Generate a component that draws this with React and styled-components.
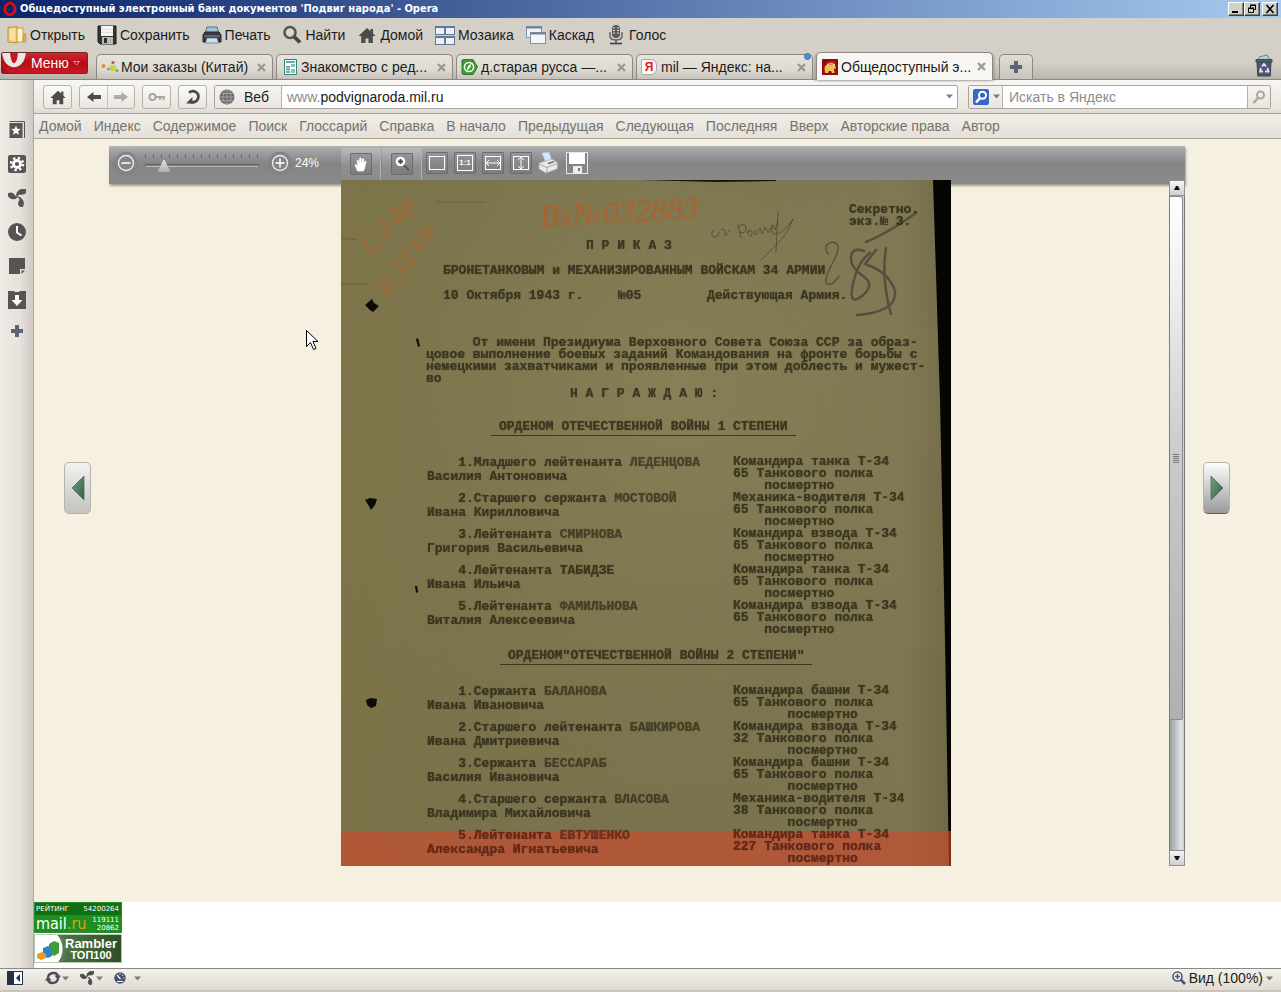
import React from "react";
import styled, { createGlobalStyle, css } from "styled-components";

const Global = createGlobalStyle`
  *, *::before, *::after { box-sizing: border-box; }
  html, body, #root { height: 100%; }
  body { margin: 0; overflow: hidden; background: #d4d0c8; font: 14px/18px "Liberation Sans", Arial, sans-serif; color: #1c1b19; }
  button { font: inherit; color: inherit; padding: 0; border: 0; background: none; }
  input { font: inherit; color: inherit; padding: 0; border: 0; background: none; outline: 0; min-width: 0; }
  svg { display: block; flex: none; }
  p, h1, h2, h3, ol, ul { margin: 0; padding: 0; list-style: none; font: inherit; }
`;

/* ---------- window ---------- */
const Window = styled.div`
  position: relative;
  display: flex;
  flex-direction: column;
  height: 100vh;
  min-height: 700px;
`;
const TitleBar = styled.header`
  display: flex;
  align-items: center;
  flex: none;
  height: 18px;
  padding: 0 3px;
  gap: 3px;
  background: linear-gradient(90deg, #0a246a, #a6caf0);
`;
const Title = styled.h1`
  flex: 1;
  color: #fff;
  font: bold 11px/16px "DejaVu Sans Condensed", "DejaVu Sans", Verdana, sans-serif;
  white-space: nowrap;
  overflow: hidden;
`;
const WindowButtons = styled.div`
  display: flex;
  & > button:last-child { margin-left: 2px; }
`;
const WindowButton = styled.button`
  display: grid;
  place-items: center;
  width: 16px;
  height: 14px;
  background: #d4d0c8;
  border: 1px solid;
  border-color: #fff #404040 #404040 #fff;
  box-shadow: inset -1px -1px #808080;
`;
const MainBar = styled.nav`
  display: flex;
  align-items: center;
  flex: none;
  gap: 12px;
  height: 34px;
  padding-left: 7px;
`;
const MainButton = styled.button`
  display: flex;
  align-items: center;
  gap: 3px;
`;

/* ---------- tabs ---------- */
const TabBar = styled.div`
  display: flex;
  align-items: stretch;
  flex: none;
  height: 28px;
  padding-right: 8px;
  border-bottom: 1px solid #8b8883;
  background: linear-gradient(#d4d0c8 40%, #bab6af);
`;
const MenuButton = styled.button`
  display: flex;
  align-items: center;
  gap: 4px;
  width: 87px;
  height: 22px;
  margin: 0 8px 0 1px;
  overflow: hidden;
  color: #fff;
  border: 1px solid #6f2a2a;
  border-radius: 2px;
  background: linear-gradient(#ce2a30, #b80c16 50%, #c81a22);
`;
const Tab = styled.div`
  position: relative;
  display: flex;
  align-items: center;
  width: 177px;
  margin: 2px 3px 0 0;
  padding: 0 5px 0 4px;
  gap: 2px;
  border: 1px solid #8b8883;
  border-bottom: 0;
  border-radius: 5px 5px 0 0;
  background: linear-gradient(#e6e3dd, #dedad4 60%, #c6c2bb);
  ${(p) => p.$active && css`
    margin: 0 6px -1px 0;
    background: #f8f6f2;
    box-shadow: -2px 1px 2px #8b888377, 2px 1px 2px #8b888377;
    z-index: 1;
  `}
`;
const TabLabel = styled.span`
  flex: 1;
  white-space: nowrap;
  overflow: hidden;
`;
const CloseTab = styled.button`
  display: grid;
  place-items: center;
  width: 11px;
  height: 16px;
`;
const Unread = styled.i`
  position: absolute;
  top: -2px;
  right: 1px;
  width: 7px;
  height: 7px;
  border-radius: 50%;
  background: #4a8fdc;
  border: 1px solid #3b72b5;
`;
const NewTab = styled.button`
  display: grid;
  place-items: center;
  width: 34px;
  margin-top: 2px;
  border: 1px solid #8b8883;
  border-bottom: 0;
  border-radius: 5px 5px 0 0;
  background: linear-gradient(#e0dcd6, #c9c5be);
`;
const TrashButton = styled.button`
  margin-left: auto;
`;

/* ---------- body ---------- */
const Body = styled.div`
  display: flex;
  flex: 1;
  min-height: 0;
`;
const SidePanel = styled.aside`
  display: flex;
  flex-direction: column;
  align-items: center;
  flex: none;
  gap: 16px;
  width: 34px;
  padding-top: 41px;
  border-right: 1px solid #aba59d;
  background: linear-gradient(90deg, #eeeae4, #e7e3dc 60%, #cfcbc4);
`;
const PanelButton = styled.button`
  display: grid;
  place-items: center;
  width: 18px;
  height: ${(p) => (p.$small ? 10 : 18)}px;
`;
const Main = styled.div`
  display: flex;
  flex-direction: column;
  flex: 1;
  min-width: 0;
`;
const AddressBar = styled.form`
  display: flex;
  align-items: center;
  flex: none;
  gap: 7px;
  height: 34px;
  padding: 0 10px 0 9px;
  border-bottom: 1px solid #a8a299;
  background: linear-gradient(#f8f6f2, #e9e6df 85%, #ddd9d1);
`;
const ButtonGroup = styled.div`
  display: flex;
  height: 24px;
  border: 1px solid #b5b1a9;
  border-radius: 3px;
  background: linear-gradient(#fbfaf8, #e9e6e0);
  & > button + button { border-left: 1px solid #c5c1b9; }
`;
const ToolButton = styled.button`
  display: grid;
  place-items: center;
  width: 27px;
`;
const Field = styled.div`
  display: flex;
  align-items: stretch;
  flex: ${(p) => (p.$wide ? 1 : "none")};
  width: ${(p) => (p.$wide ? "auto" : "303px")};
  margin-left: ${(p) => (p.$wide ? 0 : 3)}px;
  height: 24px;
  border: 1px solid #a9a59e;
  border-radius: 2px;
  background: #fff;
`;
const FieldHead = styled.button`
  display: flex;
  align-items: center;
  width: ${(p) => p.$w}px;
  padding-left: 4px;
  gap: ${(p) => p.$gap}px;
  border-right: 1px solid #b5b1a9;
  background: linear-gradient(#f6f4f0, #e9e6e0);
`;
const Prefix = styled.label`
  align-self: center;
  padding-left: 5px;
  color: #8a8a8a;
`;
const TextInput = styled.input`
  flex: 1;
  padding-left: ${(p) => p.$pad}px;
  &::placeholder { color: #8c8c8c; opacity: 1; }
`;
const FieldTail = styled.button`
  display: grid;
  place-items: center;
  width: ${(p) => (p.$boxed ? 23 : 15)}px;
  ${(p) => p.$boxed && css`
    border-left: 1px solid #b5b1a9;
    background: linear-gradient(#f6f4f0, #e9e6e0);
  `}
`;
const LinkBar = styled.nav`
  display: flex;
  align-items: center;
  flex: none;
  gap: 12px;
  height: 25px;
  padding-left: 5px;
  border-bottom: 1px solid #aaa399;
  background: linear-gradient(#f1eee9, #e4e0d8);
  white-space: nowrap;
`;
const BarLink = styled.a`
  color: #77736c;
  text-decoration: none;
`;

/* ---------- viewer ---------- */
const Page = styled.main`
  position: relative;
  display: flex;
  flex: 1;
  min-height: 0;
  padding: 7px 0 36px;
  background: #f5f0df;
`;
const PagerCell = styled.div`
  display: flex;
  align-items: center;
  flex: none;
  width: ${(p) => p.$w}px;
  padding: 0 0 36px ${(p) => p.$pad}px;
`;
const PagerButton = styled.button`
  display: grid;
  place-items: center;
  width: 27px;
  height: 52px;
  border: 1px solid #b5b3ad;
  border-bottom-color: ${(p) => (p.$strong ? "#5f5f5f" : "#b5b3ad")};
  border-radius: 5px;
  background: ${(p) => (p.$strong ? "linear-gradient(#fdfdfd, #9b9b9b)" : "linear-gradient(#f3f2f0, #c4c2c0)")};
`;
const Viewer = styled.section`
  display: flex;
  flex-direction: column;
  flex: 1;
  min-width: 0;
`;
const ViewerBar = styled.div`
  display: flex;
  align-items: center;
  flex: none;
  height: 38px;
  padding: 0 0 4px 6px;
  color: #fff;
  background: linear-gradient(#b5b5b5, #a4a4a4 10%, #858585 45%, #8a8a8a);
  box-shadow: 1px 2px 2px #8f897acc;
`;
const RoundButton = styled.button`
  display: grid;
  place-items: center;
  width: 22px;
  height: 22px;
  border-radius: 50%;
  background: #858585;
  box-shadow: 0 0 1px #6b6b6b;
`;
const ZoomSlider = styled.div`
  display: block;
  width: 114px;
  height: 22px;
  margin: 0 10px 0 8px;
`;
const Range = styled.input`
  display: block;
  width: 100%;
  height: 13px;
  margin: 0;
  appearance: none;
  &::-webkit-slider-runnable-track {
    height: 3px;
    border: 1px solid #5e5e5e;
    border-bottom-color: #b5b5b5;
    border-radius: 2px;
  }
  &::-webkit-slider-thumb {
    appearance: none;
    width: 12px;
    height: 12px;
    margin-top: -5px;
    background: linear-gradient(#e0e0e0, #b0b0b0);
    clip-path: polygon(45% 0, 55% 0, 100% 90%, 95% 100%, 5% 100%, 0 90%);
  }
`;
const Percent = styled.output`
  width: 50px;
  padding-left: 4px;
  font-size: 12px;
`;
const ModeCell = styled.div`
  display: grid;
  place-items: center;
  align-self: stretch;
  width: 40px;
  margin: 2px 1px -4px 0;
  padding-bottom: 4px;
  border-right: 1px solid #b0b0b0;
  background: linear-gradient(#bababa, #8f8f8f 50%, #8a8a8a);
`;
const SquareButton = styled.button`
  display: grid;
  place-items: center;
  width: 22px;
  height: 22px;
  background: linear-gradient(#969696, #7c7c7c);
  border: 1px solid #6c6c6c;
  border-radius: 1px;
  color: #fff;
  font: bold 9px/10px "Liberation Sans", Arial, sans-serif;
`;
const ActionButtons = styled.div`
  display: flex;
  gap: 6px;
  padding-left: 3px;
`;
const PlainButton = styled.button`
  display: grid;
  place-items: center;
  width: 22px;
  height: 22px;
`;
const RatioBox = styled.span`
  padding: 2px 1px;
  border: 1px solid #fff;
  font-size: 8px;
`;
const Stage = styled.div`
  position: relative;
  display: grid;
  grid-template-columns: 1fr 610px 1fr;
  flex: 1;
  min-height: 0;
  margin-top: -4px;
`;
const Sheet = styled.article`
  position: relative;
  grid-column: 2;
  min-height: 0;
  overflow: hidden;
  margin-left: -1px;
  margin-right: 1px;
  background: linear-gradient(90deg, #857c4e, #827a52 20%, #827b56 70%, #877f5b 92%, #766e4a);
  color: #2f2b19;
  font: bold 13px/12px "Liberation Mono", "Courier New", monospace;
  white-space: pre;
`;
const SheetArt = styled.svg`
  position: absolute;
  inset: 0;
`;
const Typed = styled.div`
  position: relative;
  opacity: 0.84;
  text-shadow: 0 0 1px #2f2b19;
`;
const Stamp = styled.p`
  padding: 24px 0 0 508px;
`;
const Centered = styled.h2`
  padding-left: ${(p) => p.$left}px;
  margin-top: ${(p) => p.$top}px;
`;
const DateLine = styled.p`
  display: grid;
  grid-template-columns: 175px 89px 1fr;
  margin-top: 13px;
  padding-left: 102px;
`;
const Preamble = styled.p`
  margin-top: 35px;
  padding-left: 85px;
`;
const AwardTitle = styled.h3`
  width: max-content;
  margin: ${(p) => p.$top}px 0 0 ${(p) => p.$left}px;
  padding: 0 8px 2px;
  border-bottom: 1px solid #2f2b19;
`;
const Awards = styled.ol`
  margin-top: ${(p) => p.$top}px;
`;
const Award = styled.li`
  display: grid;
  grid-template-columns: 306px 1fr;
  height: 36px;
  padding-left: 86px;
  color: ${(p) => (p.$marked ? "#5e1c10" : "inherit")};
`;
const Person = styled.p`
  line-height: 14px;
`;
const Name = styled.b`
  opacity: ${(p) => (p.$faint ? 0.85 : 1)};
`;
const Highlight = styled.div`
  position: absolute;
  left: 0;
  right: 0;
  bottom: 0;
  height: 35px;
  background: #d4482c99;
`;
const Scroll = styled.div`
  display: flex;
  flex-direction: column;
  justify-self: end;
  grid-column: 3;
  width: 16px;
  border: 1px solid #777d7c;
  background: linear-gradient(90deg, #98a0a1, #e2e6e6 80%, #c9cdcd);
`;
const ScrollArrow = styled.button`
  display: grid;
  place-items: center;
  flex: none;
  height: 14px;
  background: linear-gradient(#f6f6f6, #cfcfcf);
  outline: 1px solid #8d9191;
`;
const ScrollTrack = styled.div`
  flex: 1;
  padding-top: 1px;
`;
const ScrollThumb = styled.div`
  display: grid;
  place-items: center;
  width: 13px;
  height: 80%;
  border: 1px solid #8b8b94;
  border-left: 0;
  border-radius: 0 3px 2px 0;
  background: linear-gradient(#fff, #ececec 20%, #cacaca 50%, #b0b0b0);
`;
const Pointer = styled.svg`
  position: absolute;
  left: 272px;
  top: 191px;
`;

/* ---------- counters & status ---------- */
const Counters = styled.footer`
  flex: none;
  display: flex;
  flex-direction: column;
  align-items: flex-start;
  gap: 1px;
  height: 66px;
  background: #fff;
`;
const MailBadge = styled.a`
  display: flex;
  flex-direction: column;
  width: 88px;
  height: 31px;
  color: #fff;
  text-decoration: none;
  border: 1px solid #2c8a2c;
  background: linear-gradient(#106f13 12px, #1f8f22 12px);
  font: 7px/8px "DejaVu Sans", Verdana, sans-serif;
`;
const BadgeRow = styled.span`
  display: flex;
  align-items: center;
  justify-content: space-between;
  height: ${(p) => p.$h}px;
  padding: 0 2px 0 1px;
  text-align: right;
`;
const MailLogo = styled.span`
  font: 16px/16px "DejaVu Sans Condensed", "DejaVu Sans", sans-serif;
  & > b { font-weight: normal; color: #e0a112; }
`;
const RamblerBadge = styled.a`
  display: flex;
  align-items: center;
  width: 88px;
  height: 29px;
  color: #fff;
  text-decoration: none;
  border: 1px solid #b9c9b3;
  background: radial-gradient(circle at 6px 14px, #fff 21px, #5f7d55 22px, #4d7043 28px, #2b4f23);
`;
const RamblerText = styled.span`
  display: block;
  padding-left: 6px;
  font: bold 13px/13px "Liberation Sans", Arial, sans-serif;
  text-align: center;
  & > small { display: block; font-size: 11px; line-height: 11px; }
`;
const StatusBar = styled.footer`
  display: flex;
  align-items: center;
  flex: none;
  height: 24px;
  padding: 0 8px 3px 7px;
  border-top: 1px solid #8c8984;
  border-bottom: 2px solid #c9c5bd;
  background: linear-gradient(#f3f1ec, #dfdbd3);
`;
const StatusButton = styled.button`
  display: flex;
  align-items: center;
  gap: ${(p) => p.$gap}px;
  margin-left: ${(p) => p.$left}px;
`;
const ViewButton = styled(StatusButton)`
  margin-left: auto;
`;

/* ---------- icons ---------- */
const Svg = ({ w = 20, h = w, vb, children, ...r }) => (
  <svg width={w} height={h} viewBox={vb || `0 0 ${w} ${h}`} aria-hidden="true" {...r}>{children}</svg>
);
const OperaIcon = () => (
  <Svg w={14}><ellipse cx="7" cy="7" rx="5" ry="5.600" fill="none" stroke="#d01018" strokeWidth="3.200" /><ellipse cx="7" cy="7" rx="2" ry="4.400" fill="#0a246a" /></Svg>
);
const OpenIcon = () => (
  <Svg><path d="M9 3h7v14H8z" fill="#fff3d0" stroke="#c99b3f" /><path d="M17 9h2v8h-3z" fill="#e0b04f" stroke="#b98a35" strokeWidth=".6" /><path d="M1 2.500l9-1V18l-9-1z" fill="#f4cf80" stroke="#bf9138" /><path d="M3 4l5-.6v12l-5-.8z" fill="#fbe0a0" /></Svg>
);
const SaveIcon = () => (
  <Svg><path d="M1 1h18v18H3l-2-2z" fill="#353535" stroke="#1d1d1d" /><rect x="4" y="1" width="12" height="10" fill="#f4f4f4" /><path d="M4 4.500h12M4 7.500h12" stroke="#e2e2e2" /><rect x="5" y="12" width="11" height="7" fill="#b9b9b9" /><rect x="7" y="13" width="3" height="5" fill="#2d2d2d" /></Svg>
);
const PrintIcon = () => (
  <Svg><path d="M5 2h10l2 7H3z" fill="#9fc3dc" stroke="#56748a" /><path d="M3 7h14l2 3v7H1v-7z" fill="#363b40" stroke="#23272a" /><path d="M2 11h16" stroke="#87919a" /><path d="M5 13h10l1.500 5h-13z" fill="#c9e0ee" stroke="#617889" strokeWidth=".8" /></Svg>
);
const SearchIcon = () => (
  <Svg><circle cx="8" cy="7.500" r="5.500" fill="#d9d7d2" stroke="#555" strokeWidth="2.600" /><path d="M12 11.500l6 6" stroke="#454545" strokeWidth="3.800" /></Svg>
);
const HomeIcon = ({ w = 20 }) => (
  <Svg w={w} vb="0 0 20 20"><path d="M10 3L1.500 11h2.700v7h4.300v-4.500h3V18h4.300v-7h2.700L16 8.500V4h-2.500v2.200z" fill="#4c4c4a" /></Svg>
);
const MosaicIcon = () => (
  <Svg>{[[0, 1], [10, 1], [0, 11], [10, 11]].map(([x, y]) => (
    <g key={x + "-" + y}><rect x={x + 0.5} y={y + 0.5} width="9" height="8" fill="#edf0f5" stroke="#647796" /><path d={`M${x} ${y + 1}h10`} stroke="#647796" strokeWidth="2" /></g>
  ))}</Svg>
);
const CascadeIcon = () => (
  <Svg><rect x=".5" y="1.500" width="15" height="11" fill="#eef1f6" stroke="#8090ac" /><path d="M0 2.500h16" stroke="#6f81a0" strokeWidth="2" /><rect x="4.500" y="7.500" width="15" height="11" fill="#f5f6f8" stroke="#8090ac" /><path d="M4 8.500h16" stroke="#6f81a0" strokeWidth="2" /></Svg>
);
const MicIcon = () => (
  <Svg><rect x="6" y="0" width="8" height="13" rx="4" fill="#5a5a5a" /><path d="M7 3h2M11 3h2M7 5.500h2M11 5.500h2M7 8h2M11 8h2" stroke="#e0e0e0" /><path d="M4 7v4c0 2.500 2 4 6 4s6-1.500 6-4V7M10 15v3" fill="none" stroke="#555" strokeWidth="1.300" /><path d="M4 18.500h12" stroke="#3f3f3f" strokeWidth="1.600" /></Svg>
);
const MenuO = () => (
  <Svg w={25} h={20}><path d="M0 -3C0 20 24 20 24 -3z" fill="#e9e7e5" /><path d="M8 -4C8 15 16 15 16 -4z" fill="#c41820" /><path d="M0 7v6C4 18 8 20 8 20H0z" fill="#a8121a" /></Svg>
);
const Chevron = ({ c = "#7d7a7a" }) => <Svg w={7} h={5}><path d="M0 .5h7L3.500 4.500z" fill={c} /></Svg>;
const MenuChevron = () => <Svg w={7} h={5}><path d="M.5.500h6l-3 3.500z" fill="none" stroke="#e58f94" /></Svg>;
const CloseIcon = () => <Svg w={9}><path d="M1 1l7 7M8 1L1 8" stroke="#9a9791" strokeWidth="2.200" /></Svg>;
const Plus = ({ w = 12 }) => <Svg w={w} vb="0 0 12 12"><path d="M4 0h4v4h4v4H8v4H4V8H0V4h4z" fill="#5d6478" /></Svg>;
const OrdersIcon = () => (
  <Svg w={18}><circle cx="2.500" cy="8" r="2" fill="#f08a28" /><circle cx="7.500" cy="11" r="1.600" fill="#4fb3d8" /><circle cx="12" cy="4.500" r="1.600" fill="#b04d94" /><circle cx="12" cy="10" r="3.200" fill="#c9d43a" /><circle cx="16" cy="12.500" r="1.500" fill="#45b3b5" /></Svg>
);
const NewsIcon = () => (
  <Svg w={18}><path d="M3.500 1.500h12v15h-12z" fill="#fff" stroke="#3d817b" /><path d="M5 4h9M5 9h4M5 11.500h4M5 14h4" stroke="#2e9490" strokeWidth="1.600" /><path d="M10 6h4v3h-4zM10 11h4v4h-4z" fill="#7cc7b6" /></Svg>
);
const CompassIcon = () => (
  <Svg w={18}><path d="M1 3q0-1.500 1.500-1.500H12l4.500 7.500-4.500 7.500H2.500Q1 16.500 1 15z" fill="#3a9e35" stroke="#2a7a28" /><circle cx="8" cy="9" r="4.600" fill="none" stroke="#fff" strokeWidth="1.500" /><path d="M10.500 5.500L9 10l-3.500 2.500L7 8z" fill="#fff" /></Svg>
);
const YaMark = styled.span`
  display: grid;
  place-items: center;
  width: 16px;
  height: 16px;
  margin-right: 2px;
  color: #e01b12;
  background: #f9f9f9;
  border: 1px solid #aaa;
  border-radius: 2px 6px 6px 2px;
  font: bold 12px/14px "Liberation Sans Narrow", "Liberation Sans", sans-serif;
`;
const EmblemIcon = () => (
  <Svg w={18}><rect x="1" y="1" width="16" height="16" fill="#8e0f10" /><path d="M4 8q5-4 10-1l1 3-2 1 .5 4H11l-1-2H8l-1 2H4l-.5-4z" fill="#f2c14a" /><path d="M5 6q3-4 9-2l-1 3H6z" fill="#d8281d" /><path d="M6 6.500q4-1.500 8 0" stroke="#fff0c0" fill="none" /></Svg>
);
const TrashIcon = () => (
  <Svg w={18} h={24}><path d="M4 3l8-2 3 5H4z" fill="#a8d7cf" stroke="#5b8e8a" /><path d="M1 5.500h16V8H1z" fill="#59647d" stroke="#39425a" /><path d="M2 8h14l-.8 14H2.800z" fill="#4b5670" stroke="#39425a" /><path d="M7 12.500l2-2.500 2 2.500M12.500 14l1 3.500H10M8 17.500H5L6 14" stroke="#dfe6f2" strokeWidth="1.800" fill="none" /></Svg>
);
const Arrow = ({ back, c }) => <Svg w={16}><path d={back ? "M1 8l6.500-5v3H15v4H7.500v3z" : "M15 8L8.500 3v3H1v4h7.500v3z"} fill={c} /></Svg>;
const KeyIcon = () => <Svg w={18}><circle cx="4.500" cy="9" r="3" fill="none" stroke="#aaa7a2" strokeWidth="2" /><path d="M7 9h10M12 9v3M15.500 9v3" stroke="#aaa7a2" strokeWidth="2" fill="none" /></Svg>;
const ReloadIcon = () => <Svg w={18}><path d="M5 4.500C10 1 15.500 5 14.200 10c-1 4.500-7 5.500-9.500 3" fill="none" stroke="#4b4b49" strokeWidth="2.800" /><path d="M2 9h6.500v6.500z" fill="#4b4b49" transform="rotate(90 5.250 12.250)" /></Svg>;
const GlobeIcon = () => (
  <Svg w={16}><circle cx="8" cy="8" r="7.500" fill="#6c6c6c" /><path d="M0.500 8h15M8 .5v15M2 4.500h12M2 11.500h12" stroke="#a9a9a9" fill="none" strokeWidth=".8" /><ellipse cx="8" cy="8" rx="4" ry="7.500" fill="none" stroke="#a9a9a9" strokeWidth=".8" /></Svg>
);
const YaSearch = () => <Svg w={16}><rect width="16" height="16" rx="2" fill="#3767c9" /><circle cx="9.500" cy="6.200" r="3.500" fill="none" stroke="#fff" strokeWidth="2" /><path d="M7 9l-4 4.500" stroke="#fff" strokeWidth="2.600" /></Svg>;
const GraySearch = () => <Svg w={14}><circle cx="8.500" cy="5" r="3.500" fill="none" stroke="#aaa7a1" strokeWidth="2" /><path d="M6 8l-4.500 5" stroke="#aaa7a1" strokeWidth="2.600" /></Svg>;
const dark = "#565553";
const PanelIcons = {
  Закладки: <Svg w={18}><path d="M1.500 2h13v15h-13z" fill={dark} /><path d="M1.500.500h15V17" stroke={dark} fill="none" /><path d="M8 4.500l1.300 3.300 3.500.2-2.700 2.300.9 3.500-3-1.900-3 1.900.9-3.500L3.200 8l3.500-.2z" fill="#fff" /></Svg>,
  Виджеты: <Svg w={18}><rect width="18" height="18" rx="2" fill={dark} /><circle cx="9" cy="9" r="3.500" fill="none" stroke="#fff" strokeWidth="2.800" /><circle cx="9" cy="9" r="6" fill="none" stroke="#fff" strokeWidth="2.600" strokeDasharray="2.350 2.362" /></Svg>,
  Unite: <Svg w={18}><path d="M9 7C8 3 12-.5 18 .5c.5 4-3 5-6 4.500C10.500 5 10 6 9 7zM9 8c-3 3-8 2-9-3 3-2 5.500-.5 6.500 1.500C7 7.500 8 8 9 8zM10 8c4 1 6.500 5 4.500 9.500-4 .5-4.500-3-3-5.500 1-1.500.5-3-1.500-4z" fill={dark} stroke={dark} strokeWidth="1.200" /></Svg>,
  История: <Svg w={18}><circle cx="9" cy="9" r="9" fill={dark} /><path d="M9 3v6.500l4.500 3" fill="none" stroke="#fff" strokeWidth="2" /></Svg>,
  Заметки: <Svg w={18}><path d="M1 1h16v11h-5v5H1z" fill={dark} /><path d="M13.500 17v-3.500H17z" fill={dark} /></Svg>,
  Загрузки: <Svg w={18}><path d="M0 0h6l1 1h4l1-1h6v18H0z" fill={dark} /><path d="M7 4h4v5h3.500L9 15 3.500 9H7z" fill="#fff" /></Svg>,
};
const HandIcon = () => <Svg w={18}><path d="M5.500 16L3 10l1-.6 2 2L5 5.500l1.300-.3 1.200 3.500L7.700 3h1.400l.4 5.500 1-4.800 1.300.3-.4 5L13 6l1 .5-1.200 6L11.500 16z" fill="#fff" stroke="#fff" strokeWidth=".6" /></Svg>;
const MagnifyIcon = () => <Svg w={18}><path d="M11 10l5 5.500" stroke="#5b5b5b" strokeWidth="2" /><circle cx="7.500" cy="6.500" r="4.800" fill="#fff" /><path d="M5 6.500h5M7.500 4v5" stroke="#444" strokeWidth="1.800" /></Svg>;
const FrameIcon = ({ d }) => <Svg w={18} h={16}><rect x="1.500" y="1.500" width="15" height="13" fill="none" stroke="#fff" />{d && <path d={d} fill="none" stroke="#fff" />}</Svg>;
const PrinterLight = () => (
  <Svg w={22}><path d="M4 1l7-1 3 9H7z" fill="#d5e5fb" stroke="#a3bfe8" strokeWidth=".7" /><path d="M1 11l13-4 6 4-1 6-11 4-7-4z" fill="#e9e9e6" stroke="#a9a9a6" strokeWidth=".7" /><path d="M1 12l8 3.500 11-4.300M9 15.500V21" stroke="#a5a5a2" fill="none" /><path d="M9 11l6-2 2 1-6 2.300z" fill="#777" /></Svg>
);
const FloppyLight = () => (
  <Svg w={22}><rect x=".5" y=".5" width="21" height="21" fill="#858585" stroke="#e8e8e8" /><rect x="3" y="1" width="16" height="11" fill="#fff" /><rect x="7" y="14" width="9" height="7" fill="#ededed" /><rect x="12" y="16" width="2" height="3" fill="#777" /></Svg>
);
const Triangle = ({ right }) => (
  <Svg w={14} h={26}><defs><linearGradient id={right ? "tr" : "tl"} x1="0" y1="0" x2="1" y2="1"><stop offset="0" stopColor="#7aa188" /><stop offset="1" stopColor="#2f5e41" /></linearGradient></defs><path d={right ? "M1 1v24l12-12z" : "M13 1v24L1 13z"} fill={`url(#${right ? "tr" : "tl"})`} stroke="#4a6f56" strokeWidth=".8" /></Svg>
);

/* Ink, pencil and wear on the scanned sheet */
const SheetMarks = () => (
  <SheetArt width="610" height="686" viewBox="0 0 610 686" aria-hidden="true">
    <defs>
      <filter id="grain" x="0" y="0" width="100%" height="100%">
        <feTurbulence type="fractalNoise" baseFrequency="0.35" numOctaves="3" seed="4" />
        <feColorMatrix values="0 0 0 0 0.2  0 0 0 0 0.18  0 0 0 0 0.08  0.5 0 0 0 -0.12" />
      </filter>
      <radialGradient id="lamp" cx=".55" cy=".3" r=".8"><stop offset="0" stopColor="#938a5c" stopOpacity=".35" /><stop offset="1" stopColor="#4f4928" stopOpacity=".18" /></radialGradient>
    </defs>
    <rect width="610" height="686" fill="url(#lamp)" />
    <rect width="610" height="686" filter="url(#grain)" opacity=".4" />
    <path d="M592 0L599 220 604 460 608 686H610V0z" fill="#050504" />
    <path d="M300 0h135v1l-60 1z" fill="#17150c" />
    <g fill="#0c0b07">
      <path d="M24 125l7-6 2 4 5 3-6 6-3-2z" />
      <path d="M24 320l5-2 7 1-2 6-4 5-2-4z" />
      <path d="M25 520l5-2 6 1-1 7-5 2-4-3z" />
      <path d="M75 159l2-1 2 8-2 1zM74 406h2l1 6-2 1z" />
    </g>
    <g fill="#b0602c" opacity=".9" fontFamily="Liberation Serif, serif" fontStyle="italic" fontWeight="400">
      <text x="199" y="47" fontSize="32" transform="rotate(-3 199 47)">Вх№032883</text>
      <text x="30" y="76" fontSize="25" transform="rotate(-48 30 76)">С 3 др</text>
      <text x="46" y="119" fontSize="22" transform="rotate(-54 46 119)">31.12.43г</text>
    </g>
    <path d="M23 115L62 66l14-9" fill="none" stroke="#a85d2d" opacity=".6" />
    <g fill="none" stroke="#45413a" strokeLinecap="round">
      <path d="M372 50q-3 6 1 7t5-5M380 50q4-4 4 6l5-6M397 45l3 13M397 47q8-6 8 1t-7 4M407 52q4-4 4 1t-3 2q-3-1 0-5M415 50q-4 3 0 5l4-7 2 6 3-7 3 6 4-8 3 5 3-9M437 32l-2 40M433 45q-6 8 1 9t18-15q-6 16-16 25L420 80" opacity=".7" />
      <path d="M487 74q-6-10 5-12 10 2 0 20t-6 22q6 2 12-8" strokeWidth="1.500" opacity=".7" />
      <path d="M523 71q-12-4-13 6t12 19-1 20-9-12 17-31M535 70l-11 14q24 8 30 27 2 21-38 24M545 68q-5 30 5 66M525 62q20-8 50-29" strokeWidth="2.500" opacity=".75" />
    </g>
    <path d="M0 104h28M0 58l16 2M95 22h50" stroke="#4b4527" opacity=".35" />
  </SheetArt>
);

/* ---------- data ---------- */
const mainItems = [
  ["Открыть", <OpenIcon />], ["Сохранить", <SaveIcon />], ["Печать", <PrintIcon />], ["Найти", <SearchIcon />],
  ["Домой", <HomeIcon />], ["Мозаика", <MosaicIcon />], ["Каскад", <CascadeIcon />], ["Голос", <MicIcon />],
];
const tabs = [
  { label: "Мои заказы (Китай)", icon: <OrdersIcon /> },
  { label: "Знакомство с ред...", icon: <NewsIcon /> },
  { label: "д.старая русса —...", icon: <CompassIcon /> },
  { label: "mil — Яндекс: на...", icon: <YaMark>Я</YaMark>, unread: true },
  { label: "Общедоступный э...", icon: <EmblemIcon />, active: true },
];
const links = ["Домой", "Индекс", "Содержимое", "Поиск", "Глоссарий", "Справка", "В начало", "Предыдущая", "Следующая", "Последняя", "Вверх", "Авторские права", "Автор"];
const preamble = [
  "      От имени Президиума Верховного Совета Союза ССР за образ-",
  "цовое выполнение боевых заданий Командования на фронте борьбы с",
  "немецкими захватчиками и проявленные при этом доблесть и мужест-",
  "во",
].join("\n");
const firstDegree = [
  ["1.Младшего лейтенанта", "ЛЕДЕНЦОВА", "Василия Антоновича", "Командира танка Т-34", "65"],
  ["2.Старшего сержанта", "МОСТОВОЙ", "Ивана Кирилловича", "Механика-водителя Т-34", "65"],
  ["3.Лейтенанта", "СМИРНОВА", "Григория Васильевича", "Командира взвода Т-34", "65"],
  ["4.Лейтенанта", "ТАБИДЗЕ", "Ивана Ильича", "Командира танка Т-34", "65"],
  ["5.Лейтенанта", "ФАМИЛЬНОВА", "Виталия Алексеевича", "Командира взвода Т-34", "65"],
];
const secondDegree = [
  ["1.Сержанта", "БАЛАНОВА", "Ивана Ивановича", "Командира башни Т-34", "65"],
  ["2.Старшего лейтенанта", "БАШКИРОВА", "Ивана Дмитриевича", "Командира взвода Т-34", "32"],
  ["3.Сержанта", "БЕССАРАБ", "Василия Ивановича", "Командира башни Т-34", "65"],
  ["4.Старшего сержанта", "ВЛАСОВА", "Владимира Михайловича", "Механика-водителя Т-34", "38"],
  ["5.Лейтенанта", "ЕВТУШЕНКО", "Александра Игнатьевича", "Командира танка Т-34", "227"],
];
const AwardList = ({ rows, top, indent, marked }) => (
  <Awards $top={top}>
    {rows.map(([rank, name, given, post, unit]) => (
      <Award key={name} $marked={name === marked}>
        <Person>{"    " + rank + " "}<Name $faint={name !== "ТАБИДЗЕ"}>{name}</Name>{"\n" + given}</Person>
        <p>{`${post}\n${unit} Танкового полка\n${" ".repeat(indent)}посмертно`}</p>
      </Award>
    ))}
  </Awards>
);

export default function App() {
  return (
    <Window>
      <Global />
      <TitleBar>
        <OperaIcon />
        <Title>Общедоступный электронный банк документов 'Подвиг народа' - Opera</Title>
        <WindowButtons>
          <WindowButton aria-label="Свернуть"><Svg w={10}><path d="M1 8h6" stroke="#000" strokeWidth="2" /></Svg></WindowButton>
          <WindowButton aria-label="Восстановить"><Svg w={10}><path d="M3.500 4V1.500h5v4H7M3 1h6" stroke="#000" fill="none" /><path d="M1.500 4.500h5v4h-5zM1 4h6" stroke="#000" fill="none" /></Svg></WindowButton>
          <WindowButton aria-label="Закрыть"><Svg w={10}><path d="M1.500 1l7 8M8.500 1l-7 8" stroke="#000" strokeWidth="1.600" /></Svg></WindowButton>
        </WindowButtons>
      </TitleBar>
      <MainBar>
        {mainItems.map(([label, icon]) => <MainButton key={label}>{icon}{label}</MainButton>)}
      </MainBar>
      <TabBar>
        <MenuButton><MenuO />Меню<MenuChevron /></MenuButton>
        {tabs.map((t) => (
          <Tab key={t.label} $active={t.active}>
            {t.icon}<TabLabel>{t.label}</TabLabel>
            <CloseTab aria-label="Закрыть вкладку"><CloseIcon /></CloseTab>
            {t.unread && <Unread />}
          </Tab>
        ))}
        <NewTab aria-label="Новая вкладка"><Plus /></NewTab>
        <TrashButton aria-label="Закрытые вкладки"><TrashIcon /></TrashButton>
      </TabBar>
      <Body>
        <SidePanel>
          {Object.entries(PanelIcons).map(([k, icon]) => <PanelButton key={k} aria-label={k}>{icon}</PanelButton>)}
          <PanelButton $small aria-label="Добавить"><Plus /></PanelButton>
        </SidePanel>
        <Main>
          <AddressBar onSubmit={(e) => e.preventDefault()}>
            <ButtonGroup><ToolButton type="button" aria-label="Домой"><HomeIcon w={18} /></ToolButton></ButtonGroup>
            <ButtonGroup>
              <ToolButton type="button" aria-label="Назад"><Arrow back c="#4b4b49" /></ToolButton>
              <ToolButton type="button" aria-label="Вперёд"><Arrow c="#aeaba6" /></ToolButton>
            </ButtonGroup>
            <ButtonGroup><ToolButton type="button" aria-label="Пароль"><KeyIcon /></ToolButton></ButtonGroup>
            <ButtonGroup><ToolButton type="button" aria-label="Обновить"><ReloadIcon /></ToolButton></ButtonGroup>
            <Field $wide>
              <FieldHead type="button" $w={67} $gap={9}><GlobeIcon />Веб</FieldHead>
              <Prefix htmlFor="address">www.</Prefix>
              <TextInput id="address" $pad={0} defaultValue="podvignaroda.mil.ru" />
              <FieldTail type="button" aria-label="Показать адреса"><Chevron c="#7a7f8e" /></FieldTail>
            </Field>
            <Field>
              <FieldHead type="button" $w={34} $gap={4} aria-label="Поисковая система"><YaSearch /><Chevron /></FieldHead>
              <TextInput $pad={6} placeholder="Искать в Яндекс" aria-label="Искать в Яндекс" />
              <FieldTail $boxed aria-label="Искать"><GraySearch /></FieldTail>
            </Field>
          </AddressBar>
          <LinkBar>{links.map((l) => <BarLink key={l} href="#">{l}</BarLink>)}</LinkBar>
          <Page>
            <PagerCell $w={75} $pad={30}><PagerButton aria-label="Предыдущий лист"><Triangle /></PagerButton></PagerCell>
            <Viewer>
              <ViewerBar>
                <RoundButton aria-label="Уменьшить"><Svg w={20}><circle cx="10" cy="10" r="7.500" fill="none" stroke="#eee" strokeWidth="1.300" /><path d="M5.500 10h9" stroke="#eee" strokeWidth="1.800" /></Svg></RoundButton>
                <ZoomSlider>
                  <Svg w={114} h={7}><path d={Array.from({ length: 15 }, (_, i) => `M${i * 8 + 0.5} 2v4`).join("")} stroke="#6b6b6b" /></Svg>
                  <Range type="range" min="0" max="100" defaultValue="12" aria-label="Масштаб" />
                </ZoomSlider>
                <RoundButton aria-label="Увеличить"><Svg w={20}><circle cx="10" cy="10" r="7.500" fill="none" stroke="#eee" strokeWidth="1.300" /><path d="M5.500 10h9M10 5.500v9" stroke="#eee" strokeWidth="1.800" /></Svg></RoundButton>
                <Percent>24%</Percent>
                <ModeCell><SquareButton aria-label="Перемещать"><HandIcon /></SquareButton></ModeCell>
                <ModeCell><SquareButton aria-label="Лупа"><MagnifyIcon /></SquareButton></ModeCell>
                <ActionButtons>
                  <SquareButton aria-label="Весь лист"><FrameIcon /></SquareButton>
                  <SquareButton><RatioBox>1:1</RatioBox></SquareButton>
                  <SquareButton aria-label="По ширине"><FrameIcon d="M2 8h14M5 5L2 8l3 3M13 5l3 3-3 3" /></SquareButton>
                  <SquareButton aria-label="По высоте"><FrameIcon d="M9 2v12M6 5l3-3 3 3M6 11l3 3 3-3" /></SquareButton>
                  <PlainButton aria-label="Печать"><PrinterLight /></PlainButton>
                  <PlainButton aria-label="Сохранить"><FloppyLight /></PlainButton>
                </ActionButtons>
              </ViewerBar>
              <Stage>
                <Sheet>
                  <SheetMarks />
                  <Highlight />
                  <Typed>
                    <Stamp>{"Секретно.\nэкз.№ 3."}</Stamp>
                    <Centered $left={245} $top={12}>П Р И К А З</Centered>
                    <Centered $left={102} $top={13}>БРОНЕТАНКОВЫМ и МЕХАНИЗИРОВАННЫМ ВОЙСКАМ 34 АРМИИ</Centered>
                    <DateLine><span>10 Октября 1943 г.</span><span>№05</span><span>Действующая Армия.</span></DateLine>
                    <Preamble>{preamble}</Preamble>
                    <Centered $left={229} $top={3}>Н А Г Р А Ж Д А Ю :</Centered>
                    <AwardTitle $top={21} $left={150}>ОРДЕНОМ ОТЕЧЕСТВЕННОЙ ВОЙНЫ 1 СТЕПЕНИ</AwardTitle>
                    <AwardList rows={firstDegree} top={20} indent={4} />
                    <AwardTitle $top={14} $left={159}>ОРДЕНОМ"ОТЕЧЕСТВЕННОЙ ВОЙНЫ 2 СТЕПЕНИ"</AwardTitle>
                    <AwardList rows={secondDegree} top={20} indent={7} marked="ЕВТУШЕНКО" />
                  </Typed>
                </Sheet>
                <Scroll>
                  <ScrollArrow aria-label="Вверх"><Svg w={6} h={4}><path d="M0 4h6L4 0H2z" fill="#111" /></Svg></ScrollArrow>
                  <ScrollTrack><ScrollThumb><Svg w={6} h={9}><path d="M0 .5h6M0 2.500h6M0 4.500h6M0 6.500h6M0 8.500h6" stroke="#777" /></Svg></ScrollThumb></ScrollTrack>
                  <ScrollArrow aria-label="Вниз"><Svg w={6} h={4}><path d="M0 0h6L4 4H2z" fill="#111" /></Svg></ScrollArrow>
                </Scroll>
              </Stage>
            </Viewer>
            <PagerCell $w={96} $pad={18}><PagerButton $strong aria-label="Следующий лист"><Triangle right /></PagerButton></PagerCell>
            <Pointer width="13" height="21" viewBox="0 0 13 21" aria-hidden="true"><path d="M.5.500v16l4-4 3 7 2.500-1-3-7h5z" fill="#fff" stroke="#000" /></Pointer>
          </Page>
          <Counters>
            <MailBadge href="#">
              <BadgeRow $h={12}><span>РЕЙТИНГ</span><span>54200264</span></BadgeRow>
              <BadgeRow $h={17}><MailLogo>mail<b>.ru</b></MailLogo><span>119111<br />20862</span></BadgeRow>
            </MailBadge>
            <RamblerBadge href="#">
              <Svg w={24} h={26}><path d="M14 8l5-3 5 2v10l-5 3-5-3z" fill="#3f9e35" /><path d="M8 12l5-2 4 2v8l-4 2-5-2z" fill="#2b86c9" /><path d="M2 18l5-2 4 2v4l-5 2-4-2z" fill="#ef9a25" /></Svg>
              <RamblerText>Rambler<small>ТОП100</small></RamblerText>
            </RamblerBadge>
          </Counters>
        </Main>
      </Body>
      <StatusBar>
        <StatusButton aria-label="Панели"><Svg w={16} h={14}><rect x=".5" y=".5" width="15" height="13" fill="#fff" stroke="#26304a" /><path d="M1 1h6v12H1z" fill="#26304a" /><path d="M13 3v8L9 7z" fill="#26304a" /></Svg></StatusButton>
        <StatusButton $left={22} $gap={1} aria-label="Синхронизация"><Svg w={16}><path d="M3 7q1-4 6-4 3 0 4 3M13 9q-1 4-6 4-3 0-4-3" fill="none" stroke="#4a4c50" strokeWidth="2.400" /><path d="M9.500 5.500h6.500l-3 4.500zM0 10.500h6.500L3 6z" fill="#4a4c50" /></Svg><Chevron /></StatusButton>
        <StatusButton $left={11} $gap={2} aria-label="Unite"><Svg w={14} vb="0 0 18 18"><path d="M9 7C8 3 12-.5 18 .5c.5 4-3 5-6 4.500C10.500 5 10 6 9 7zM9 8c-3 3-8 2-9-3 3-2 5.500-.5 6.500 1.500C7 7.500 8 8 9 8zM10 8c4 1 6.500 5 4.500 9.500-4 .5-4.500-3-3-5.500 1-1.500.5-3-1.500-4z" fill="#4a4c50" stroke="#4a4c50" strokeWidth="1.200" /></Svg><Chevron /></StatusButton>
        <StatusButton $left={11} $gap={8} aria-label="Turbo"><Svg w={12}><circle cx="6" cy="6" r="5.800" fill="#46536e" /><path d="M3 3l3.500 4M6 1.500v1M9 3l-.6.6M10.500 6h-1M3 9.500h6" stroke="#fff" strokeWidth="1.200" /></Svg><Chevron /></StatusButton>
        <ViewButton $gap={3}><Svg w={14}><circle cx="5.500" cy="5.500" r="4.500" fill="#f4f4f4" stroke="#4b5670" strokeWidth="1.600" /><path d="M3 5.500h5M5.500 3v5" stroke="#4b5670" strokeWidth="1.600" /><path d="M9 9l4 4" stroke="#4b5670" strokeWidth="2.600" /></Svg>Вид (100%)<Chevron /></ViewButton>
      </StatusBar>
    </Window>
  );
}
